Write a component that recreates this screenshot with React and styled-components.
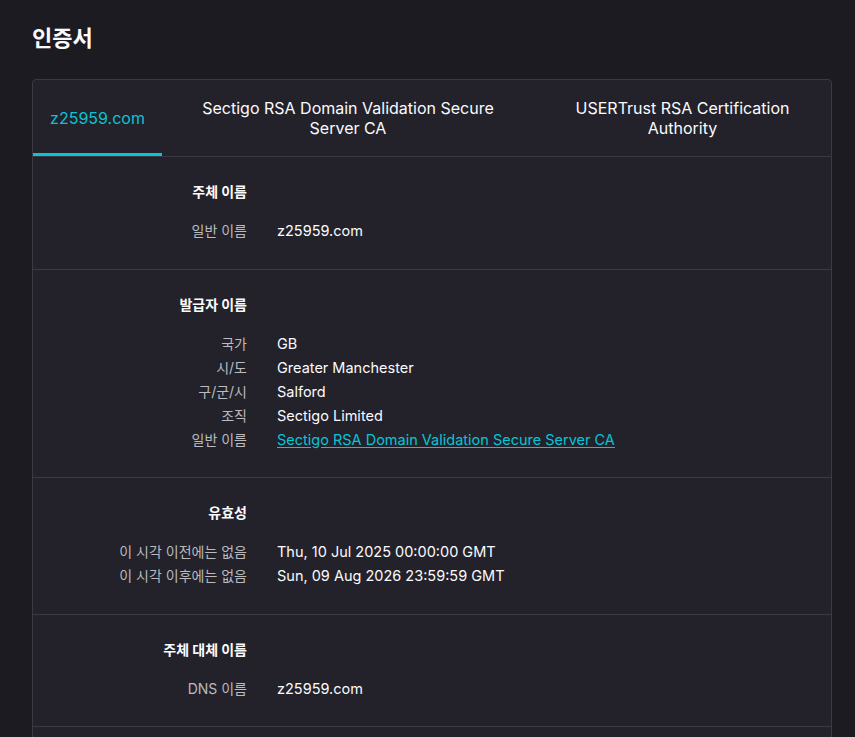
import React from "react";
import styled, { createGlobalStyle } from "styled-components";

const Global = createGlobalStyle`
  html, body { margin: 0; padding: 0; background: #1c1b22; }
  body {
    font-family: Inter, "Noto Sans", "Noto Sans CJK KR", sans-serif;
    color: #fbfbfe;
    -webkit-font-smoothing: antialiased;
  }
`;

const Page = styled.div`
  padding: 0 24px 40px 32px;
`;

const Title = styled.h1`
  margin: 0;
  padding-top: 22px;
  height: 79px;
  box-sizing: border-box;
  font-size: 22px;
  line-height: 28px;
  font-weight: 700;
  font-family: "Noto Sans CJK KR", sans-serif;
`;

const TabBar = styled.div`
  display: grid;
  grid-template-columns: 129px 372px 1fr;
  width: 800px;
  box-sizing: border-box;
  background: #23222b;
  border: 1px solid #3a3944;
  border-radius: 4px 4px 0 0;
`;

const Tab = styled.div`
  position: relative;
  height: 76px;
  display: flex;
  align-items: center;
  justify-content: center;
  text-align: center;
  padding: 0 18px;
  font-size: 16px;
  line-height: 20px;
  color: ${(p) => (p.$active ? "#08c4d6" : "#fbfbfe")};
  &::after {
    content: "";
    position: absolute;
    left: 0;
    right: 0;
    bottom: 0;
    height: 3px;
    background: ${(p) => (p.$active ? "#08c4d6" : "transparent")};
  }
`;

const Content = styled.div`
  width: 800px;
  box-sizing: border-box;
  background: #23222b;
  border: 1px solid #3a3944;
  border-top: none;
`;

const Section = styled.section`
  display: grid;
  grid-template-columns: 214px 1fr;
  column-gap: 30px;
  padding: 22px 0 25.5px;
  border-bottom: 1px solid #3a3944;
`;

const Heading = styled.div`
  grid-column: 1;
  text-align: right;
  font-size: 14px;
  line-height: 24px;
  font-weight: 700;
  color: #fbfbfe;
  margin-bottom: 16px;
  font-family: "Noto Sans CJK KR", sans-serif;
`;

const Spacer = styled.div`
  grid-column: 2;
`;

const Label = styled.div`
  grid-column: 1;
  text-align: right;
  font-size: 14px;
  line-height: 24px;
  color: #bababf;
  font-family: Inter, "Noto Sans CJK KR", sans-serif;
`;

const Value = styled.div`
  grid-column: 2;
  font-size: 14.5px;
  line-height: 24px;
  color: #fbfbfe;
`;

const Link = styled.a`
  color: #08c4d6;
  text-decoration: underline;
  text-underline-offset: 2px;
  cursor: pointer;
`;

const sections = [
  { title: "주체 이름", rows: [["일반 이름", "z25959.com"]] },
  {
    title: "발급자 이름",
    rows: [
      ["국가", "GB"],
      ["시/도", "Greater Manchester"],
      ["구/군/시", "Salford"],
      ["조직", "Sectigo Limited"],
      ["일반 이름", "Sectigo RSA Domain Validation Secure Server CA", true],
    ],
  },
  {
    title: "유효성",
    rows: [
      ["이 시각 이전에는 없음", "Thu, 10 Jul 2025 00:00:00 GMT"],
      ["이 시각 이후에는 없음", "Sun, 09 Aug 2026 23:59:59 GMT"],
    ],
  },
  { title: "주체 대체 이름", rows: [["DNS 이름", "z25959.com"]] },
  {
    title: "공개 키 정보",
    rows: [
      ["알고리즘", "RSA"],
      ["키 크기", "2048"],
      ["지수", "65537"],
    ],
  },
];

export default function App() {
  return (
    <>
      <Global />
      <Page>
        <Title>인증서</Title>
        <TabBar>
          <Tab $active>z25959.com</Tab>
          <Tab>Sectigo RSA Domain Validation Secure Server CA</Tab>
          <Tab>USERTrust RSA Certification Authority</Tab>
        </TabBar>
        <Content>
          {sections.map((s) => (
            <Section key={s.title}>
              <Heading>{s.title}</Heading>
              <Spacer />
              {s.rows.map(([l, v, link]) => (
                <React.Fragment key={l + v}>
                  <Label>{l}</Label>
                  <Value>{link ? <Link>{v}</Link> : v}</Value>
                </React.Fragment>
              ))}
            </Section>
          ))}
        </Content>
      </Page>
    </>
  );
}
